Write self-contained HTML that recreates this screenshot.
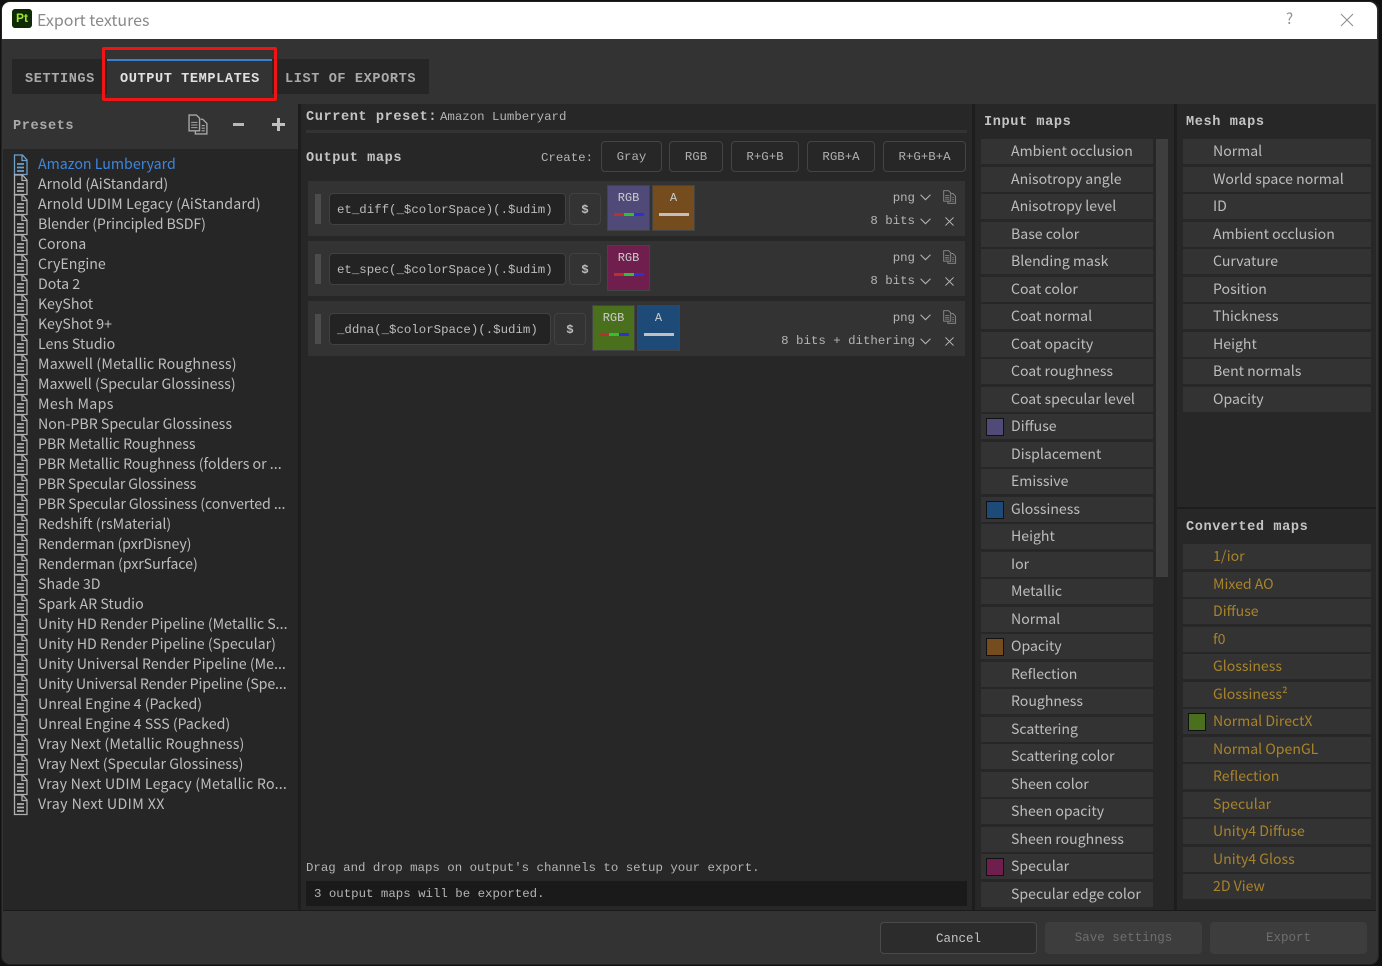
<!DOCTYPE html>
<html><head><meta charset="utf-8"><title>Export textures</title>
<style>
html,body{margin:0;padding:0;background:#111;width:1382px;height:966px;overflow:hidden}
*{box-sizing:border-box}
.a{position:absolute}
#w{position:absolute;left:1px;top:1px;width:1378px;height:964px;background:#333;border-radius:9px;overflow:hidden;border:1px solid #222}
#root{position:absolute;left:0;top:0;width:1382px;height:966px;font-family:"Noto Sans CJK SC","Liberation Sans",sans-serif;color:#c8c8c8;font-size:14px}
.m{font-family:"Liberation Mono",monospace;font-size:12.4px;white-space:pre;color:#b4b4b4;line-height:16px}
.m.b{font-weight:bold;color:#c4c4c4;font-size:13.6px;letter-spacing:.58px}
.l{position:absolute;left:38px;white-space:pre;font-size:14.2px;line-height:20px;height:20px;color:#bdbdbd}
.r{position:absolute;height:25px;background:#333;font-size:14.1px;line-height:25px;padding-left:30px;color:#bdbdbd;white-space:pre}
.ri{left:981px;width:172px}
.rm{left:1183px;width:188px}
.rc{left:1183px;width:188px;color:#a8832a}
.sw{position:absolute;left:5px;top:4px;width:18px;height:18px;border:1px solid #111}
.btn{position:absolute;top:141px;height:31px;border:1px solid #444;border-radius:4px;text-align:center;line-height:31px;font-family:"Liberation Mono",monospace;font-size:12.4px;color:#b0b0b0}
.row{position:absolute;left:308px;width:657px;height:55px;background:#333}
.hd{position:absolute;left:7px;top:13px;width:6px;height:30px;background:#4c4c4c}
.in{position:absolute;left:21px;top:12px;height:32px;background:#232323;border:1px solid #414141;border-radius:4px;font-family:"Liberation Mono",monospace;font-size:12.4px;line-height:32px;padding-left:7px;color:#bcbcbc;white-space:pre}
.dl{position:absolute;top:12px;width:32px;height:32px;border:1px solid #414141;border-radius:4px;text-align:center;line-height:32px;font-family:"Liberation Mono",monospace;font-size:12.4px;font-weight:bold;color:#bcbcbc}
.ch{position:absolute;top:4px;width:43px;height:46px;border:1px solid #444;text-align:center;font-family:"Liberation Mono",monospace;font-size:12px;line-height:15px;padding-top:5px;color:#ccc}
.tri{position:absolute;left:6px;top:27px;width:30px;height:3px;background:linear-gradient(90deg,#b83030 0 33%,#30c030 33% 66%,#3030d0 66%)}
.bar{position:absolute;left:6px;top:27px;width:30px;height:3px;background:#c0c0c0}
.rt{position:absolute;right:50px;text-align:right;font-family:"Liberation Mono",monospace;font-size:12.4px;color:#b4b4b4;white-space:pre;line-height:16px}
.f{position:absolute;top:922px;width:157px;height:32px;border-radius:4px;text-align:center;line-height:33px;font-family:"Liberation Mono",monospace;font-size:12.5px}
svg{position:absolute;overflow:visible}
</style></head><body>
<svg width="0" height="0" style="position:absolute"><defs>
<symbol id="d" viewBox="0 0 15 22"><path d="M1.500 1h8l4.500 5v14.500h-12.500z" fill="none" stroke="currentColor" stroke-width="1.300"/><path d="M9 1v5.500h5" fill="none" stroke="currentColor" stroke-width="1.300"/><path d="M4 10h7M4 13.500h7M4 17h7" fill="none" stroke="currentColor" stroke-width="1.700"/></symbol>
<symbol id="c" viewBox="0 0 20 20"><path d="M1 1h7l3 3v12H1z" fill="none" stroke="currentColor" stroke-width="1.300"/><path d="M3 8h6M3 10.500h6M3 13h6" stroke="currentColor"/><path d="M12 5h2l4 4v10H7v-3" fill="none" stroke="currentColor" stroke-width="1.300"/><path d="M13 11h3M13 13.500h3M13 16h3" stroke="currentColor"/></symbol>
<symbol id="v" viewBox="0 0 10 6"><path d="M.5.500 5 5 9.500.500" fill="none" stroke="#b0b0b0" stroke-width="1"/></symbol>
<symbol id="x" viewBox="0 0 10 10"><path d="M.5.500l9 9M9.500.500l-9 9" fill="none" stroke="#b8b8b8" stroke-width="1.100"/></symbol>
</defs></svg>
<div id="w"></div>
<div id="root">
<div class="a" style="left:2px;top:2px;width:1375px;height:37px;background:#fff;border-radius:8px 8px 0 0"></div>
<div class="a" style="left:12px;top:9px;width:20px;height:19px;background:#0f2a04;border-radius:3px;color:#a4e638;font:bold 12px/19px 'Liberation Sans',sans-serif;text-align:center">Pt</div>
<div class="a" style="left:37px;top:9px;font-size:16px;line-height:20px;color:#8a8a8a;white-space:pre">Export textures</div>
<div class="a" style="left:1286px;top:9px;font-size:15px;line-height:20px;color:#909090">?</div>
<svg style="left:1341px;top:14px" width="12" height="12" viewBox="0 0 12 12"><path d="M0 0l12 12M12 0L0 12" stroke="#8a8a8a" fill="none"/></svg>

<div class="a" style="left:12px;top:59px;width:417px;height:35px;background:#262626"></div>
<div class="a" style="left:107px;top:59px;width:165px;height:35px;background:#333;border-top:2px solid #3a7fd0"></div>
<div class="a m b" style="left:25px;top:72px;color:#aaa">SETTINGS</div>
<div class="a m b" style="left:120px;top:72px;color:#e0e0e0">OUTPUT TEMPLATES</div>
<div class="a m b" style="left:285px;top:72px;color:#aaa">LIST OF EXPORTS</div>
<div class="a" style="left:102px;top:47px;width:175px;height:54px;border:3px solid #f01414;border-radius:2px"></div>

<div class="a" style="left:3px;top:104px;width:295px;height:45px;background:#333"></div>
<div class="a" style="left:3px;top:149px;width:295px;height:762px;background:#262626"></div>
<div class="a" style="left:298px;top:104px;width:3px;height:807px;background:#1d1d1d"></div>
<div class="a" style="left:301px;top:104px;width:671px;height:807px;background:#272727"></div>
<div class="a" style="left:972px;top:104px;width:3px;height:807px;background:#1d1d1d"></div>
<div class="a" style="left:975px;top:104px;width:199px;height:807px;background:#272727"></div>
<div class="a" style="left:1174px;top:104px;width:3px;height:807px;background:#1d1d1d"></div>
<div class="a" style="left:1177px;top:104px;width:199px;height:403px;background:#272727"></div>
<div class="a" style="left:1177px;top:507px;width:199px;height:2px;background:#1d1d1d"></div>
<div class="a" style="left:1177px;top:509px;width:199px;height:402px;background:#272727"></div>
<div class="a" style="left:3px;top:910px;width:1373px;height:1px;background:#1a1a1a"></div>

<div class="a m b" style="left:13px;top:119px;color:#aaa">Presets</div>
<svg style="left:188px;top:114px;color:#a8a8a8" width="21" height="21"><use href="#c" width="21" height="21"/></svg>
<div class="a" style="left:233px;top:123px;width:11px;height:3px;background:#b8b8b8"></div>
<div class="a" style="left:272px;top:123px;width:13px;height:3px;background:#c0c0c0"></div>
<div class="a" style="left:277px;top:118px;width:3px;height:13px;background:#c0c0c0"></div>

<div class="l" style="top:154px;color:#3d86de">Amazon Lumberyard</div>
<div class="l" style="top:174px">Arnold (AiStandard)</div>
<div class="l" style="top:194px;letter-spacing:.16px">Arnold UDIM Legacy (AiStandard)</div>
<div class="l" style="top:214px;letter-spacing:-.12px">Blender (Principled BSDF)</div>
<div class="l" style="top:234px">Corona</div>
<div class="l" style="top:254px">CryEngine</div>
<div class="l" style="top:274px">Dota 2</div>
<div class="l" style="top:294px">KeyShot</div>
<div class="l" style="top:314px">KeyShot 9+</div>
<div class="l" style="top:334px">Lens Studio</div>
<div class="l" style="top:354px;letter-spacing:.18px">Maxwell (Metallic Roughness)</div>
<div class="l" style="top:374px">Maxwell (Specular Glossiness)</div>
<div class="l" style="top:394px;letter-spacing:.33px">Mesh Maps</div>
<div class="l" style="top:414px">Non-PBR Specular Glossiness</div>
<div class="l" style="top:434px">PBR Metallic Roughness</div>
<div class="l" style="top:454px">PBR Metallic Roughness (folders or ...</div>
<div class="l" style="top:474px;letter-spacing:-.15px">PBR Specular Glossiness</div>
<div class="l" style="top:494px;letter-spacing:-.1px">PBR Specular Glossiness (converted ...</div>
<div class="l" style="top:514px">Redshift (rsMaterial)</div>
<div class="l" style="top:534px;letter-spacing:-.1px">Renderman (pxrDisney)</div>
<div class="l" style="top:554px;letter-spacing:-.05px">Renderman (pxrSurface)</div>
<div class="l" style="top:574px">Shade 3D</div>
<div class="l" style="top:594px">Spark AR Studio</div>
<div class="l" style="top:614px">Unity HD Render Pipeline (Metallic S...</div>
<div class="l" style="top:634px">Unity HD Render Pipeline (Specular)</div>
<div class="l" style="top:654px">Unity Universal Render Pipeline (Me...</div>
<div class="l" style="top:674px;letter-spacing:-.13px">Unity Universal Render Pipeline (Spe...</div>
<div class="l" style="top:694px">Unreal Engine 4 (Packed)</div>
<div class="l" style="top:714px">Unreal Engine 4 SSS (Packed)</div>
<div class="l" style="top:734px;letter-spacing:.17px">Vray Next (Metallic Roughness)</div>
<div class="l" style="top:754px">Vray Next (Specular Glossiness)</div>
<div class="l" style="top:774px;letter-spacing:.22px">Vray Next UDIM Legacy (Metallic Ro...</div>
<div class="l" style="top:794px;letter-spacing:.41px">Vray Next UDIM XX</div>

<svg style="left:13px;top:154px;color:#6fa0c8" width="15" height="22"><use href="#d" width="15" height="22"/></svg>
<svg style="left:13px;top:174px;color:#b0b0b0" width="15" height="22"><use href="#d" width="15" height="22"/></svg>
<svg style="left:13px;top:194px;color:#b0b0b0" width="15" height="22"><use href="#d" width="15" height="22"/></svg>
<svg style="left:13px;top:214px;color:#b0b0b0" width="15" height="22"><use href="#d" width="15" height="22"/></svg>
<svg style="left:13px;top:234px;color:#b0b0b0" width="15" height="22"><use href="#d" width="15" height="22"/></svg>
<svg style="left:13px;top:254px;color:#b0b0b0" width="15" height="22"><use href="#d" width="15" height="22"/></svg>
<svg style="left:13px;top:274px;color:#b0b0b0" width="15" height="22"><use href="#d" width="15" height="22"/></svg>
<svg style="left:13px;top:294px;color:#b0b0b0" width="15" height="22"><use href="#d" width="15" height="22"/></svg>
<svg style="left:13px;top:314px;color:#b0b0b0" width="15" height="22"><use href="#d" width="15" height="22"/></svg>
<svg style="left:13px;top:334px;color:#b0b0b0" width="15" height="22"><use href="#d" width="15" height="22"/></svg>
<svg style="left:13px;top:354px;color:#b0b0b0" width="15" height="22"><use href="#d" width="15" height="22"/></svg>
<svg style="left:13px;top:374px;color:#b0b0b0" width="15" height="22"><use href="#d" width="15" height="22"/></svg>
<svg style="left:13px;top:394px;color:#b0b0b0" width="15" height="22"><use href="#d" width="15" height="22"/></svg>
<svg style="left:13px;top:414px;color:#b0b0b0" width="15" height="22"><use href="#d" width="15" height="22"/></svg>
<svg style="left:13px;top:434px;color:#b0b0b0" width="15" height="22"><use href="#d" width="15" height="22"/></svg>
<svg style="left:13px;top:454px;color:#b0b0b0" width="15" height="22"><use href="#d" width="15" height="22"/></svg>
<svg style="left:13px;top:474px;color:#b0b0b0" width="15" height="22"><use href="#d" width="15" height="22"/></svg>
<svg style="left:13px;top:494px;color:#b0b0b0" width="15" height="22"><use href="#d" width="15" height="22"/></svg>
<svg style="left:13px;top:514px;color:#b0b0b0" width="15" height="22"><use href="#d" width="15" height="22"/></svg>
<svg style="left:13px;top:534px;color:#b0b0b0" width="15" height="22"><use href="#d" width="15" height="22"/></svg>
<svg style="left:13px;top:554px;color:#b0b0b0" width="15" height="22"><use href="#d" width="15" height="22"/></svg>
<svg style="left:13px;top:574px;color:#b0b0b0" width="15" height="22"><use href="#d" width="15" height="22"/></svg>
<svg style="left:13px;top:594px;color:#b0b0b0" width="15" height="22"><use href="#d" width="15" height="22"/></svg>
<svg style="left:13px;top:614px;color:#b0b0b0" width="15" height="22"><use href="#d" width="15" height="22"/></svg>
<svg style="left:13px;top:634px;color:#b0b0b0" width="15" height="22"><use href="#d" width="15" height="22"/></svg>
<svg style="left:13px;top:654px;color:#b0b0b0" width="15" height="22"><use href="#d" width="15" height="22"/></svg>
<svg style="left:13px;top:674px;color:#b0b0b0" width="15" height="22"><use href="#d" width="15" height="22"/></svg>
<svg style="left:13px;top:694px;color:#b0b0b0" width="15" height="22"><use href="#d" width="15" height="22"/></svg>
<svg style="left:13px;top:714px;color:#b0b0b0" width="15" height="22"><use href="#d" width="15" height="22"/></svg>
<svg style="left:13px;top:734px;color:#b0b0b0" width="15" height="22"><use href="#d" width="15" height="22"/></svg>
<svg style="left:13px;top:754px;color:#b0b0b0" width="15" height="22"><use href="#d" width="15" height="22"/></svg>
<svg style="left:13px;top:774px;color:#b0b0b0" width="15" height="22"><use href="#d" width="15" height="22"/></svg>
<svg style="left:13px;top:794px;color:#b0b0b0" width="15" height="22"><use href="#d" width="15" height="22"/></svg>

<div class="a m b" style="left:306px;top:110px">Current preset:</div>
<div class="a m" style="left:440px;top:109px">Amazon Lumberyard</div>
<div class="a" style="left:306px;top:130px;width:661px;height:3px;background:#333"></div>
<div class="a m b" style="left:306px;top:151px">Output maps</div>
<div class="a m" style="left:541px;top:150px">Create:</div>
<div class="btn" style="left:601px;width:61px">Gray</div>
<div class="btn" style="left:669px;width:54px">RGB</div>
<div class="btn" style="left:731px;width:68px">R+G+B</div>
<div class="btn" style="left:807px;width:68px">RGB+A</div>
<div class="btn" style="left:883px;width:83px">R+G+B+A</div>

<div class="row" style="top:181px"><div class="hd"></div><div class="in" style="width:237px">et_diff(_$colorSpace)(.$udim)</div><div class="dl" style="left:261px">$</div>
<div class="ch" style="left:299px;background:#4f4a78">RGB<div class="tri"></div></div><div class="ch" style="left:344px;background:#744c1e">A<div class="bar"></div></div>
<div class="rt" style="top:9px">png</div><div class="rt" style="top:32px">8 bits</div></div>
<div class="row" style="top:241px"><div class="hd"></div><div class="in" style="width:237px">et_spec(_$colorSpace)(.$udim)</div><div class="dl" style="left:261px">$</div>
<div class="ch" style="left:299px;background:#6f1e4e">RGB<div class="tri"></div></div>
<div class="rt" style="top:9px">png</div><div class="rt" style="top:32px">8 bits</div></div>
<div class="row" style="top:301px"><div class="hd"></div><div class="in" style="width:222px">_ddna(_$colorSpace)(.$udim)</div><div class="dl" style="left:246px">$</div>
<div class="ch" style="left:284px;background:#4a701e">RGB<div class="tri"></div></div><div class="ch" style="left:329px;background:#1e4a78">A<div class="bar"></div></div>
<div class="rt" style="top:9px">png</div><div class="rt" style="top:32px">8 bits + dithering</div></div>

<svg style="left:920px;top:194px" width="11" height="7"><use href="#v" width="11" height="7"/></svg>
<svg style="left:920px;top:218px" width="11" height="7"><use href="#v" width="11" height="7"/></svg>
<svg style="left:920px;top:254px" width="11" height="7"><use href="#v" width="11" height="7"/></svg>
<svg style="left:920px;top:278px" width="11" height="7"><use href="#v" width="11" height="7"/></svg>
<svg style="left:920px;top:314px" width="11" height="7"><use href="#v" width="11" height="7"/></svg>
<svg style="left:920px;top:338px" width="11" height="7"><use href="#v" width="11" height="7"/></svg>
<svg style="left:943px;top:190px;color:#8c8c8c" width="14" height="14"><use href="#c" width="14" height="14"/></svg>
<svg style="left:943px;top:250px;color:#8c8c8c" width="14" height="14"><use href="#c" width="14" height="14"/></svg>
<svg style="left:943px;top:310px;color:#8c8c8c" width="14" height="14"><use href="#c" width="14" height="14"/></svg>
<svg style="left:945px;top:217px" width="9" height="9"><use href="#x" width="9" height="9"/></svg>
<svg style="left:945px;top:277px" width="9" height="9"><use href="#x" width="9" height="9"/></svg>
<svg style="left:945px;top:337px" width="9" height="9"><use href="#x" width="9" height="9"/></svg>

<div class="a m" style="left:306px;top:860px">Drag and drop maps on output's channels to setup your export.</div>
<div class="a" style="left:306px;top:881px;width:661px;height:25px;background:#1a1a1a"></div>
<div class="a m" style="left:314px;top:886px">3 output maps will be exported.</div>

<div class="a m b" style="left:984px;top:115px">Input maps</div>
<div class="r ri" style="top:139px">Ambient occlusion</div>
<div class="r ri" style="top:167px">Anisotropy angle</div>
<div class="r ri" style="top:194px">Anisotropy level</div>
<div class="r ri" style="top:222px">Base color</div>
<div class="r ri" style="top:249px">Blending mask</div>
<div class="r ri" style="top:277px">Coat color</div>
<div class="r ri" style="top:304px">Coat normal</div>
<div class="r ri" style="top:332px">Coat opacity</div>
<div class="r ri" style="top:359px">Coat roughness</div>
<div class="r ri" style="top:387px">Coat specular level</div>
<div class="r ri" style="top:414px"><div class="sw" style="background:#4f4a78"></div>Diffuse</div>
<div class="r ri" style="top:442px">Displacement</div>
<div class="r ri" style="top:469px">Emissive</div>
<div class="r ri" style="top:497px"><div class="sw" style="background:#1e4a78"></div>Glossiness</div>
<div class="r ri" style="top:524px">Height</div>
<div class="r ri" style="top:552px">Ior</div>
<div class="r ri" style="top:579px">Metallic</div>
<div class="r ri" style="top:607px">Normal</div>
<div class="r ri" style="top:634px"><div class="sw" style="background:#744c1e"></div>Opacity</div>
<div class="r ri" style="top:662px">Reflection</div>
<div class="r ri" style="top:689px">Roughness</div>
<div class="r ri" style="top:717px">Scattering</div>
<div class="r ri" style="top:744px">Scattering color</div>
<div class="r ri" style="top:772px">Sheen color</div>
<div class="r ri" style="top:799px">Sheen opacity</div>
<div class="r ri" style="top:827px">Sheen roughness</div>
<div class="r ri" style="top:854px"><div class="sw" style="background:#6f1e4e"></div>Specular</div>
<div class="r ri" style="top:882px">Specular edge color</div>
<div class="a" style="left:1156px;top:139px;width:12px;height:438px;background:#3e3e3e"></div>

<div class="a m b" style="left:1186px;top:115px">Mesh maps</div>
<div class="r rm" style="top:139px">Normal</div>
<div class="r rm" style="top:167px">World space normal</div>
<div class="r rm" style="top:194px">ID</div>
<div class="r rm" style="top:222px">Ambient occlusion</div>
<div class="r rm" style="top:249px">Curvature</div>
<div class="r rm" style="top:277px">Position</div>
<div class="r rm" style="top:304px">Thickness</div>
<div class="r rm" style="top:332px">Height</div>
<div class="r rm" style="top:359px">Bent normals</div>
<div class="r rm" style="top:387px">Opacity</div>

<div class="a m b" style="left:1186px;top:520px">Converted maps</div>
<div class="r rc" style="top:544px">1/ior</div>
<div class="r rc" style="top:572px">Mixed AO</div>
<div class="r rc" style="top:599px">Diffuse</div>
<div class="r rc" style="top:627px">f0</div>
<div class="r rc" style="top:654px">Glossiness</div>
<div class="r rc" style="top:682px">Glossiness²</div>
<div class="r rc" style="top:709px"><div class="sw" style="background:#4a701e"></div>Normal DirectX</div>
<div class="r rc" style="top:737px">Normal OpenGL</div>
<div class="r rc" style="top:764px">Reflection</div>
<div class="r rc" style="top:792px">Specular</div>
<div class="r rc" style="top:819px">Unity4 Diffuse</div>
<div class="r rc" style="top:847px">Unity4 Gloss</div>
<div class="r rc" style="top:874px">2D View</div>

<div class="f" style="left:880px;border:1px solid #4a4a4a;background:#2c2c2c;color:#c4c4c4">Cancel</div>
<div class="f" style="left:1045px;background:#3d3d3d;color:#6e6e6e">Save settings</div>
<div class="f" style="left:1210px;background:#3d3d3d;color:#6e6e6e">Export</div>
</div>
</body></html>
